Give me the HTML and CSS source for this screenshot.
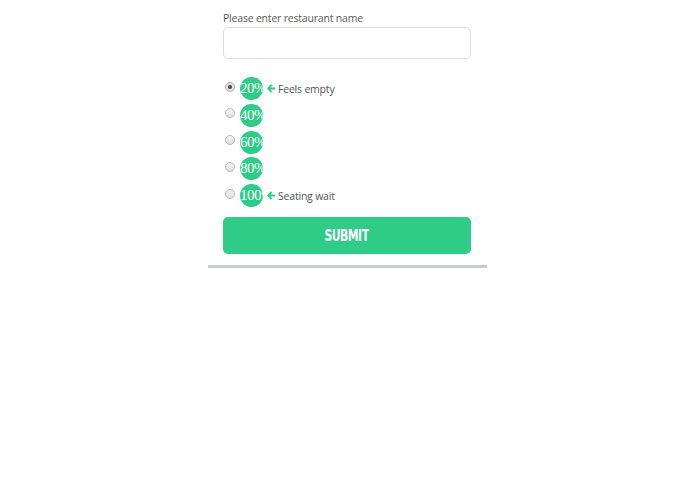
FILE: index.html
```html
<!DOCTYPE html>
<html>
<head>
<meta charset="utf-8">
<link rel="stylesheet" href="styles.css">
</head>
<body>
<div class="card">
  <label class="label" for="name">Please enter restaurant name</label>
  <input class="name-input" id="name" type="text">
  <div class="options">
    <div class="row">
      <input class="radio" type="radio" name="busy" checked>
      <span class="bubble">20%</span>
      <span class="hint"><svg class="arrow" viewBox="0 0 10 10" width="9" height="9"><path d="M5 1 L1.5 5 L5 9 M1.5 5 H9" fill="none" stroke="#2ecc87" stroke-width="2.2" stroke-linejoin="miter"/></svg>Feels empty</span>
    </div>
    <div class="row">
      <input class="radio" type="radio" name="busy">
      <span class="bubble">40%</span>
    </div>
    <div class="row">
      <input class="radio" type="radio" name="busy">
      <span class="bubble">60%</span>
    </div>
    <div class="row">
      <input class="radio" type="radio" name="busy">
      <span class="bubble">80%</span>
    </div>
    <div class="row">
      <input class="radio" type="radio" name="busy">
      <span class="bubble">100%</span>
      <span class="hint"><svg class="arrow" viewBox="0 0 10 10" width="9" height="9"><path d="M5 1 L1.5 5 L5 9 M1.5 5 H9" fill="none" stroke="#2ecc87" stroke-width="2.2" stroke-linejoin="miter"/></svg>Seating wait</span>
    </div>
  </div>
  <button class="submit" type="button"><span class="submit-text">SUBMIT</span></button>
</div>
</body>
</html>
```
FILE: styles.css
```css
html, body {
  margin: 0;
  padding: 0;
  background: #fff;
}
.card {
  width: 248px;
  margin: 0 auto;
  padding: 11px 16px 11px 15px;
  border-bottom: 3px solid #c9cdcc;
  display: flex;
  flex-direction: column;
  font-family: "Open Sans", sans-serif;
}
.label {
  font-size: 10.5px;
  letter-spacing: -0.2px;
  line-height: 14px;
  color: #5a5a5a;
}
.name-input {
  margin: 2px 0 0 0;
  box-sizing: border-box;
  width: 248px;
  height: 32px;
  border: 1px solid #ddd;
  border-radius: 5px;
  padding: 0 8px;
  outline: none;
}
.options {
  margin-top: 18px;
  display: flex;
  flex-direction: column;
  gap: 3.75px;
}
.row {
  display: flex;
  align-items: center;
  height: 23px;
}
.radio {
  -webkit-appearance: none;
  appearance: none;
  box-sizing: border-box;
  margin: 0 5px 0 2px;
  width: 10px;
  height: 10px;
  border-radius: 50%;
  border: 1px solid #b8b8b8;
  background: linear-gradient(#f6f6f6, #dedede);
  position: relative;
  top: -2px;
}
.radio:checked {
  background: radial-gradient(circle, #555 0, #555 1.8px, #e4e4e4 2.4px, #e4e4e4 100%);
  border-color: #aaa;
}
.bubble {
  width: 23px;
  height: 23px;
  border-radius: 50%;
  background: #2ecc87;
  color: #fff;
  font-family: "Liberation Serif", serif;
  font-size: 15px;
  line-height: 23px;
  letter-spacing: -0.5px;
  white-space: nowrap;
  overflow: hidden;
  text-align: left;
}
.hint {
  display: flex;
  align-items: center;
  margin-left: 4px;
  font-size: 10.5px;
  letter-spacing: -0.2px;
  color: #555;
}
.arrow {
  margin-right: 2px;
}
.submit {
  margin-top: 10px;
  height: 37px;
  width: 248px;
  border: none;
  border-radius: 5px;
  background: #2ecc87;
  color: #fff;
  padding: 0;
  display: flex;
  align-items: center;
  justify-content: center;
}
.submit-text {
  font-family: "DejaVu Sans Condensed", "DejaVu Sans", sans-serif;
  font-stretch: condensed;
  font-weight: bold;
  font-size: 15px;
  letter-spacing: -0.6px;
  display: inline-block;
  transform: scaleX(0.8);
}
```
